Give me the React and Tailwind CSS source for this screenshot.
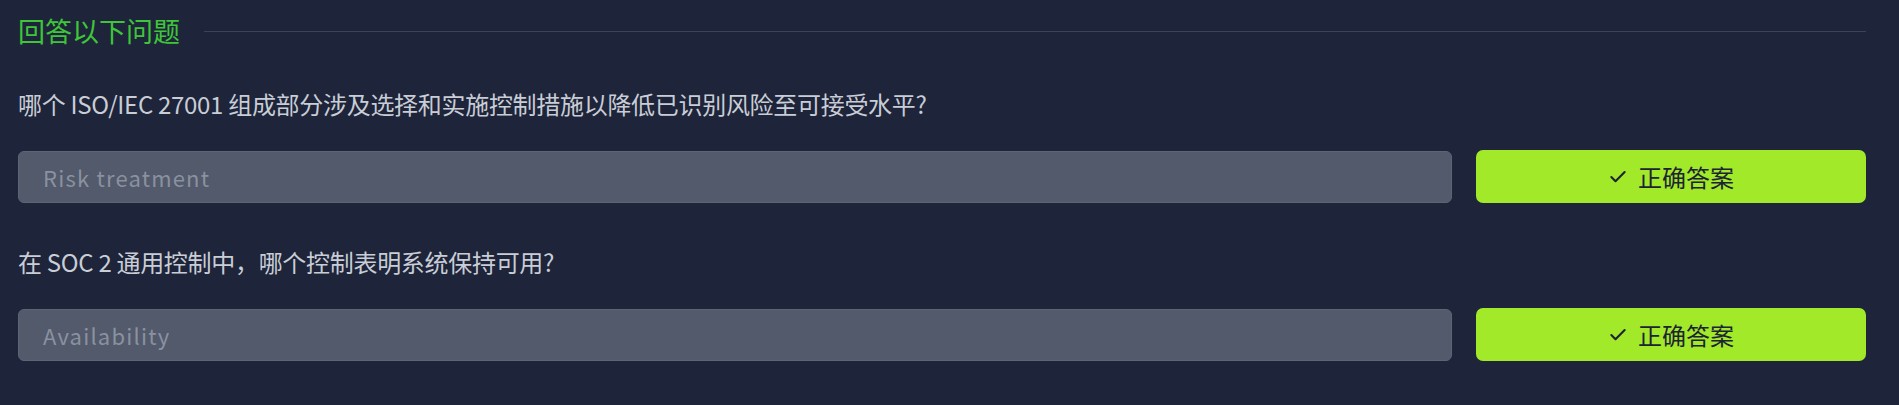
import React from "react";
import { Check } from "lucide-react";

const questions = [
  {
    q: "哪个 ISO/IEC 27001 组成部分涉及选择和实施控制措施以降低已识别风险至可接受水平?",
    a: "Risk treatment",
  },
  {
    q: "在 SOC 2 通用控制中，哪个控制表明系统保持可用?",
    a: "Availability",
  },
];

// One question row: prompt, answer field and the "correct answer" button
function QuestionRow({ q, a }) {
  return (
    <div className="flex flex-col">
      <p className="text-[24px] leading-[36px] tracking-[-0.3px] text-[#c8cdd6]">{q}</p>
      <div className="mt-[28px] flex items-center gap-[24px]">
        <input
          readOnly
          placeholder={a}
          className="h-[52px] flex-1 rounded-[6px] border border-[#5c6476] bg-[#525a6b] pl-[24px] text-[22px] tracking-[1.2px] text-[#8a91a0] placeholder:text-[#8a91a0] outline-none"
        />
        <button className="flex h-[53px] w-[390px] items-center justify-center gap-[10px] rounded-[7px] bg-[#a2e92a] text-[24px] text-[#1c2333]">
          <Check className="h-[20px] w-[20px]" strokeWidth={2.5} />
          <span>正确答案</span>
        </button>
      </div>
    </div>
  );
}

export default function App() {
  return (
    <div
      className="min-h-[405px] w-full bg-[#1e2439] pl-[18px] pr-[33px] pt-[13px]"
      style={{ fontFamily: '"Noto Sans CJK SC", "Noto Sans", sans-serif' }}
    >
      {/* Section title */}
      <div className="flex items-center gap-[24px]">
        <h2 className="text-[27px] leading-[36px] text-[#3ec53a]">回答以下问题</h2>
        <div className="h-px flex-1 bg-[#3b4357]" />
      </div>

      <div className="mt-[37px] flex flex-col gap-[41px]">
        {questions.map((item) => (
          <QuestionRow key={item.a} q={item.q} a={item.a} />
        ))}
      </div>
    </div>
  );
}
